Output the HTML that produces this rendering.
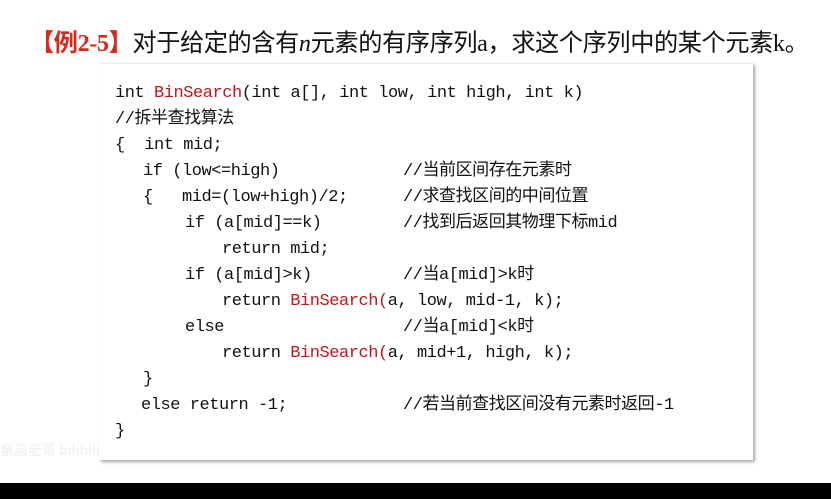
<!DOCTYPE html>
<html><head><meta charset="utf-8"><style>
body{margin:0;width:831px;height:499px;background:#fff;position:relative;overflow:hidden;font-family:"Liberation Mono","Noto Sans CJK SC",monospace;}
.t{position:absolute;left:30px;top:23px;font-family:"Liberation Serif","Noto Sans CJK SC",serif;font-size:24.2px;color:#111;white-space:nowrap;letter-spacing:-0.4px}
.t b{color:#d8281c}
.box{position:absolute;left:99px;top:63px;width:654px;height:396px;background:#fff;box-shadow:2px 2px 3px rgba(0,0,0,.35);border-top:1px solid #eee}
.l{position:absolute;font-size:17px;color:#111;white-space:pre;line-height:20px;letter-spacing:-0.45px;margin-top:2px}
.r{color:#c0161c}
.bar{position:absolute;left:0;top:483px;width:831px;height:16px;background:#000}
.wm{position:absolute;left:0;top:440px;font-family:"Noto Sans CJK SC",sans-serif;font-size:14px;color:#eeeeee}
</style></head><body>
<div class="t"><b>【例2-5】</b>对于给定的含有<i>n</i>元素的有序序列a，求这个序列中的某个元素k。</div>
<div class="box"></div>
<div class="l" style="left:115px;top:82px">int <span class="r">BinSearch</span>(int a[], int low, int high, int k)</div>
<div class="l" style="left:115px;top:108px">//拆半查找算法</div>
<div class="l" style="left:115px;top:134px">{  int mid;</div>
<div class="l" style="left:143px;top:160px">if (low&lt;=high)</div>
<div class="l" style="left:403px;top:160px">//当前区间存在元素时</div>
<div class="l" style="left:143px;top:186px">{   mid=(low+high)/2;</div>
<div class="l" style="left:403px;top:186px">//求查找区间的中间位置</div>
<div class="l" style="left:185px;top:212px">if (a[mid]==k)</div>
<div class="l" style="left:403px;top:212px">//找到后返回其物理下标mid</div>
<div class="l" style="left:222px;top:238px">return mid;</div>
<div class="l" style="left:185px;top:264px">if (a[mid]&gt;k)</div>
<div class="l" style="left:403px;top:264px">//当a[mid]&gt;k时</div>
<div class="l" style="left:222px;top:290px">return <span class="r">BinSearch(</span>a, low, mid-1, k);</div>
<div class="l" style="left:185px;top:316px">else</div>
<div class="l" style="left:403px;top:316px">//当a[mid]&lt;k时</div>
<div class="l" style="left:222px;top:342px">return <span class="r">BinSearch(</span>a, mid+1, high, k);</div>
<div class="l" style="left:143px;top:368px">}</div>
<div class="l" style="left:141px;top:394px">else return -1;</div>
<div class="l" style="left:403px;top:394px">//若当前查找区间没有元素时返回-1</div>
<div class="l" style="left:115px;top:420px">}</div>
<div class="wm">童晶老哥 bilibili</div>
<div class="bar"></div>
</body></html>
